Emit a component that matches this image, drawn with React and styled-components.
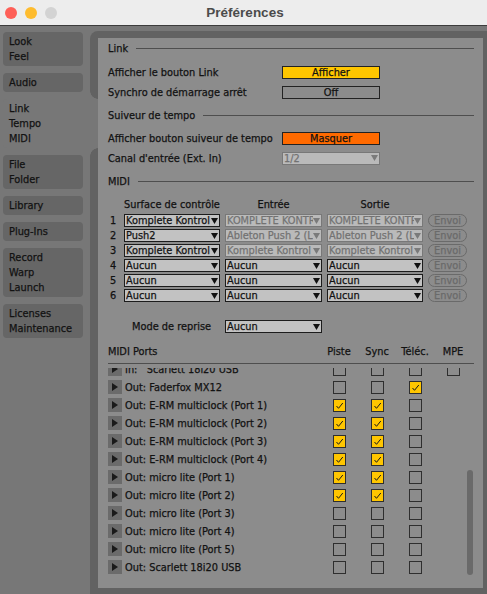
import React from "react";
import styled, { createGlobalStyle } from "styled-components";

const colors = {
  text: "#121212",
  dim: "#727272",
  sidebar: "#777777",
  tab: "#666666",
  frame: "#626262",
  panel: "#8c8c8c",
  line: "#4e4e4e",
  yellow: "#ffc600",
  orange: "#ff6a00",
  field: "#c2c2c2",
  fieldOff: "#bababa",
};

const tabs = [
  ["Look", "Feel"],
  ["Audio"],
  ["Link", "Tempo", "MIDI"],
  ["File", "Folder"],
  ["Library"],
  ["Plug-Ins"],
  ["Record", "Warp", "Launch"],
  ["Licenses", "Maintenance"],
];

const surfaces = [
  ["Komplete Kontrol", "KOMPLETE KONTR", "KOMPLETE KONTR", true],
  ["Push2", "Ableton Push 2 (L", "Ableton Push 2 (L", true],
  ["Komplete Kontrol", "Komplete Kontrol", "Komplete Kontrol", true],
  ["Aucun", "Aucun", "Aucun", false],
  ["Aucun", "Aucun", "Aucun", false],
  ["Aucun", "Aucun", "Aucun", false],
];

// [name, piste, sync, telec, mpe (null = none)]
const ports = [
  ["In:   Scarlett 18i20 USB", false, false, false, false],
  ["Out: Faderfox MX12", false, false, true, null],
  ["Out: E-RM multiclock (Port 1)", true, true, false, null],
  ["Out: E-RM multiclock (Port 2)", true, true, false, null],
  ["Out: E-RM multiclock (Port 3)", true, true, false, null],
  ["Out: E-RM multiclock (Port 4)", true, true, false, null],
  ["Out: micro lite (Port 1)", true, true, false, null],
  ["Out: micro lite (Port 2)", true, true, false, null],
  ["Out: micro lite (Port 3)", false, false, false, null],
  ["Out: micro lite (Port 4)", false, false, false, null],
  ["Out: micro lite (Port 5)", false, false, false, null],
  ["Out: Scarlett 18i20 USB", false, false, false, null],
];

const Arrow = ({ color }) => (
  <svg width="7" height="6" viewBox="0 0 7 6">
    <polygon points="0,0 7,0 3.5,6" fill={color} />
  </svg>
);

const Dropdown = ({ value, disabled }) => (
  <Select $disabled={disabled}>
    <span>{value}</span>
    <Arrow color={disabled ? "#7a7a7a" : "#111"} />
  </Select>
);

const Check = ({ on }) => (
  <Box $on={on}>
    {on && (
      <svg width="11" height="11" viewBox="0 0 11 11">
        <path d="M2.5 6 L4.5 8.3 L8.8 3" fill="none" stroke="#1a1a1a" strokeWidth="1" />
      </svg>
    )}
  </Box>
);

const App = () => {
  return (
    <Window>
      <GlobalStyle />
      <TitleBar>
        <Lights>
          <Light $color="#fe5f57" />
          <Light $color="#febc2e" />
          <Light $color="#d3d3d3" />
        </Lights>
        <Title>Préférences</Title>
        <div />
      </TitleBar>
      <Body>
        <Sidebar>
          {tabs.map((lines, i) => (
            <Tab key={i} $active={i === 2}>
              {lines.map((l) => (
                <div key={l}>{l}</div>
              ))}
            </Tab>
          ))}
        </Sidebar>
        <Frame>
          <Panel>
            <SectionHeader>Link</SectionHeader>
            <SettingRow $mt={9}>
              <span>Afficher le bouton Link</span>
              <Toggle $bg={colors.yellow}>Afficher</Toggle>
            </SettingRow>
            <SettingRow $mt={6}>
              <span>Synchro de démarrage arrêt</span>
              <Toggle>Off</Toggle>
            </SettingRow>
            <SectionHeader $mt={8}>Suiveur de tempo</SectionHeader>
            <SettingRow $mt={8}>
              <span>Afficher bouton suiveur de tempo</span>
              <Toggle $bg={colors.orange}>Masquer</Toggle>
            </SettingRow>
            <SettingRow $mt={6}>
              <span>Canal d'entrée (Ext. In)</span>
              <Dropdown value="1/2" disabled />
            </SettingRow>
            <SectionHeader $mt={8}>MIDI</SectionHeader>
            <MidiGrid>
              <span />
              <ColHead>Surface de contrôle</ColHead>
              <ColHead>Entrée</ColHead>
              <ColHead>Sortie</ColHead>
              <span />
              {surfaces.map(([s, inp, out, off], i) => (
                <React.Fragment key={i}>
                  <Num>{i + 1}</Num>
                  <Dropdown value={s} />
                  <Dropdown value={inp} disabled={off} />
                  <Dropdown value={out} disabled={off} />
                  <Envoi>Envoi</Envoi>
                </React.Fragment>
              ))}
            </MidiGrid>
            <ModeRow>
              <ModeLabel>Mode de reprise</ModeLabel>
              <Dropdown value="Aucun" />
            </ModeRow>
            <PortsHeader>
              <span>MIDI Ports</span>
              <ColHead>Piste</ColHead>
              <ColHead>Sync</ColHead>
              <ColHead>Téléc.</ColHead>
              <ColHead>MPE</ColHead>
            </PortsHeader>
            <PortList>
              <PortScroll>
                {ports.map(([name, piste, sync, telec, mpe]) => (
                  <PortRow key={name}>
                    <PortName>
                      <Expand>
                        <svg width="6" height="8" viewBox="0 0 6 8">
                          <polygon points="0,0 6,4 0,8" fill="#1a1a1a" />
                        </svg>
                      </Expand>
                      <span>{name}</span>
                    </PortName>
                    <Check on={piste} />
                    <Check on={sync} />
                    <Check on={telec} />
                    {mpe === null ? <span /> : <Check on={mpe} />}
                  </PortRow>
                ))}
              </PortScroll>
              <Scrollbar />
            </PortList>
          </Panel>
        </Frame>
      </Body>
    </Window>
  );
};

const GlobalStyle = createGlobalStyle`
  html, body {
    margin: 0;
    padding: 0;
    background: ${colors.frame};
  }
  body {
    font-family: "DejaVu Sans", sans-serif;
    font-size: 9.8px;
    color: ${colors.text};
    -webkit-text-stroke: 0.25px currentColor;
  }
  * { box-sizing: border-box; }
`;

const Window = styled.div`
  width: 487px;
  height: 594px;
  display: flex;
  flex-direction: column;
  overflow: hidden;
`;

const TitleBar = styled.div`
  height: 26px;
  flex: none;
  display: grid;
  grid-template-columns: 1fr auto 1fr;
  align-items: center;
  background: #ededed;
  border-bottom: 1px solid #3c3c3c;
`;

const Lights = styled.div`
  display: flex;
  gap: 8px;
  padding-left: 5px;
`;

const Light = styled.span`
  width: 12px;
  height: 12px;
  border-radius: 50%;
  background: ${({ $color }) => $color};
`;

const Title = styled.div`
  font-family: "Liberation Sans", Arial, sans-serif;
  font-weight: bold;
  font-size: 13.5px;
  color: #4b4b4b;
  padding-left: 3px;
  -webkit-text-stroke: 0;
`;

const Body = styled.div`
  flex: 1;
  display: flex;
  background: ${colors.sidebar};
  min-height: 0;
`;

const Sidebar = styled.div`
  width: 90px;
  flex: none;
  display: flex;
  flex-direction: column;
  gap: 7px;
  padding: 6px 0 0 3px;
`;

const Tab = styled.div`
  position: relative;
  width: ${({ $active }) => ($active ? 95 : 80)}px;
  padding: 2px 6px;
  line-height: 15px;
  border-radius: ${({ $active }) => ($active ? "4px 0 0 4px" : "4px")};
  background: ${({ $active }) => ($active ? colors.sidebar : colors.tab)};
  z-index: ${({ $active }) => ($active ? 2 : "auto")};

  ${({ $active }) =>
    $active
      ? `
    &::before, &::after {
      content: "";
      position: absolute;
      right: 0;
      width: 8px;
      height: 8px;
    }
    &::before {
      top: -8px;
      background: radial-gradient(circle at 100% 0, ${colors.frame} 7.5px, ${colors.sidebar} 8px);
    }
    &::after {
      bottom: -8px;
      background: radial-gradient(circle at 100% 100%, ${colors.frame} 7.5px, ${colors.sidebar} 8px);
    }
  `
      : ""}
`;

const Frame = styled.div`
  flex: 1;
  display: flex;
  margin-top: 5px;
  padding: 7px 4px 6px 8px;
  background: ${colors.frame};
  border-top-left-radius: 8px;
  min-height: 0;
`;

const Panel = styled.div`
  flex: 1;
  display: flex;
  flex-direction: column;
  padding: 2px 9px 8px 10px;
  background: ${colors.panel};
  min-height: 0;
  overflow: hidden;
`;

const SectionHeader = styled.div`
  display: flex;
  align-items: center;
  gap: 8px;
  height: 16px;
  margin-top: ${({ $mt }) => $mt || 0}px;
  &::after {
    content: "";
    flex: 1;
    height: 1px;
    background: ${colors.line};
  }
`;

const SettingRow = styled.div`
  display: grid;
  grid-template-columns: 174px 98px;
  align-items: center;
  height: 14px;
  margin-top: ${({ $mt }) => $mt}px;
`;

const Toggle = styled.div`
  height: 13px;
  line-height: 11px;
  text-align: center;
  border: 1px solid #222;
  background: ${({ $bg }) => $bg || "transparent"};
`;

const Select = styled.div`
  height: 13px;
  display: flex;
  align-items: center;
  padding: 0 1px;
  border: 1px solid ${({ $disabled }) => ($disabled ? "#787878" : "#1c1c1c")};
  background: ${({ $disabled }) => ($disabled ? colors.fieldOff : colors.field)};
  color: ${({ $disabled }) => ($disabled ? colors.dim : colors.text)};
  overflow: hidden;

  span {
    flex: 1;
    min-width: 0;
    white-space: nowrap;
    overflow: hidden;
    line-height: 11px;
  }
  svg {
    flex: none;
  }
`;

const MidiGrid = styled.div`
  display: grid;
  grid-template-columns: 11px 96px 97px 96px 39px;
  grid-template-rows: 15px;
  grid-auto-rows: 13px;
  column-gap: 5px;
  row-gap: 2px;
  align-items: center;
  margin-top: 8px;
`;

const ColHead = styled.span`
  text-align: center;
  white-space: nowrap;
`;

const Num = styled.span`
  padding-left: 2px;
`;

const Envoi = styled.div`
  height: 13px;
  line-height: 11px;
  text-align: center;
  border: 1px solid #6a6a6a;
  border-radius: 7px;
  color: #6a6a6a;
`;

const ModeRow = styled(MidiGrid)`
  grid-template-rows: 13px;
  margin-top: 18px;
`;

const ModeLabel = styled.span`
  grid-column: 1 / 3;
  padding-left: 24px;
`;

const PortsHeader = styled.div`
  display: grid;
  grid-template-columns: 1fr repeat(4, 38px);
  align-items: center;
  height: 21px;
  margin-top: 10px;
  padding: 0 2px 4px 0;
  border-bottom: 1px solid ${colors.line};
`;

const PortList = styled.div`
  position: relative;
  flex: 1;
  min-height: 0;
  margin-top: 4px;
  overflow: hidden;
`;

const PortScroll = styled.div`
  margin-top: -8px;
`;

const PortRow = styled.div`
  display: grid;
  grid-template-columns: 1fr repeat(4, 38px);
  align-items: center;
  justify-items: center;
  height: 18px;
  padding-right: 2px;
`;

const PortName = styled.div`
  justify-self: start;
  display: flex;
  align-items: center;
  gap: 3px;
  white-space: pre;
`;

const Expand = styled.div`
  width: 14px;
  height: 14px;
  display: flex;
  align-items: center;
  justify-content: center;
  background: #6b6b6b;
`;

const Box = styled.div`
  width: 13px;
  height: 13px;
  display: flex;
  align-items: center;
  justify-content: center;
  border: 1px solid #2e2e2e;
  background: ${({ $on }) => ($on ? colors.yellow : "transparent")};
`;

const Scrollbar = styled.div`
  position: absolute;
  right: 1px;
  top: 102px;
  width: 6px;
  height: 105px;
  border-radius: 3px;
  background: #6a6a6a;
`;

export default App;
